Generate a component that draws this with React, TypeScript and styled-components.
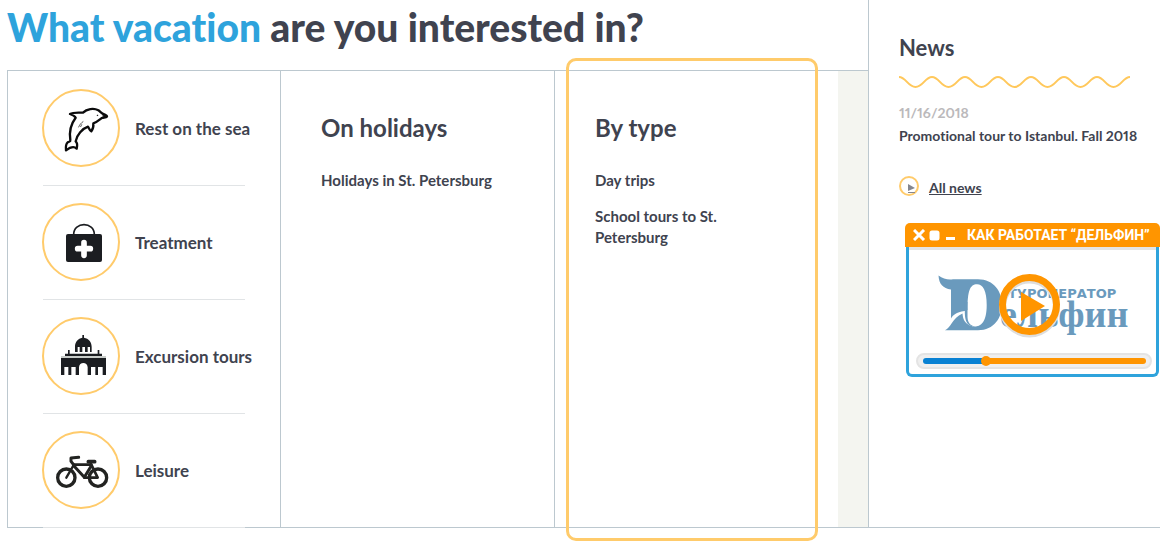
import React from 'react';
import styled, { createGlobalStyle } from 'styled-components';

const ink = '#40434f';
const line = '#bcc8cf';
const amber = '#ffcb6b';
const orange = '#ff9500';
const blue = '#2ea3dc';

const GlobalStyle = createGlobalStyle`
  * { box-sizing: border-box; }
  body {
    margin: 0;
    background: #fff;
    color: ${ink};
    font-family: Lato, "Open Sans", sans-serif;
    font-weight: 700;
    font-variant-ligatures: none;
    font-variant-numeric: proportional-nums;
  }
  h1, h2, p, ul { margin: 0; padding: 0; }
  ul { list-style: none; }
  a { color: inherit; text-decoration: none; }
`;

const Shell = styled.div`
  min-height: 100vh;
  padding: 0 0 14px 7px;
`;

const Page = styled.div`
  display: flex;
  border-bottom: 1px solid ${line};
`;

const Main = styled.main`
  flex: 1;
  min-width: 0;
`;

const Title = styled.h1`
  height: 70px;
  font-size: 39px;
  line-height: 54px;
  font-weight: 900;
  white-space: nowrap;
`;

const Accent = styled.span`
  color: ${blue};
`;

const Board = styled.div`
  display: grid;
  grid-template-columns: minmax(0, 274fr) minmax(0, 274fr) minmax(0, 283fr) 30px;
  border-top: 1px solid ${line};
`;

const Column = styled.section<{ $first?: boolean; $last?: boolean }>`
  position: relative;
  border-left: ${(p) => (p.$first ? `1px solid ${line}` : '0')};
  border-right: ${(p) => (p.$last ? '0' : `1px solid ${line}`)};
  padding: ${(p) => (p.$first ? '1px 35px 0' : '41px 40px 0')};
`;

const Gutter = styled.div`
  background: #f4f5f0;
`;

const Highlight = styled.div`
  position: absolute;
  inset: -13px 20px -14px 11px;
  border: 3px solid ${amber};
  border-radius: 10px;
  pointer-events: none;
`;

const Kinds = styled.ul`
  margin-bottom: -1px;
`;

const Kind = styled.li`
  padding: 17px 0 18px;
  border-bottom: 1px solid #e1e4e6;
`;

const KindLink = styled.a`
  display: flex;
  align-items: center;
  gap: 15px;
  margin-left: -1px;
  font-size: 17px;
  white-space: nowrap;
`;

const Disc = styled.span`
  flex: none;
  width: 78px;
  height: 78px;
  border: 2px solid ${amber};
  border-radius: 50%;

  svg { display: block; width: 100%; height: 100%; }
`;

const ColumnTitle = styled.h2`
  font-size: 24px;
  line-height: 32px;
`;

const Tours = styled.ul`
  display: grid;
  gap: 15px;
  max-width: 180px;
  padding-top: 26px;
  font-size: 15px;
  line-height: 21px;
`;

const Sidebar = styled.aside`
  flex: none;
  width: 292px;
  border-left: 1px solid ${line};
  padding: 34px 0 0 30px;
`;

const NewsTitle = styled.h2`
  font-size: 22px;
  line-height: 28px;
`;

const Wave = styled.svg`
  display: block;
  width: 231px;
  height: 12px;
  margin: 14px 0 15px;
`;

const NewsDate = styled.time`
  display: block;
  font-size: 14px;
  line-height: 20px;
  color: #bbb9bb;
`;

const NewsText = styled.p`
  font-size: 14px;
  line-height: 20px;
  padding-top: 3px;
  white-space: nowrap;
`;

const AllNews = styled.a`
  display: flex;
  align-items: flex-start;
  gap: 10px;
  margin-top: 30px;
  font-size: 14px;
  line-height: 24px;
  text-decoration: underline;

  svg { display: block; }
`;

const Video = styled.a`
  display: block;
  margin: 23px 0 0 6px;
`;

const VideoBar = styled.span`
  display: flex;
  align-items: center;
  gap: 10px;
  height: 24px;
  padding-left: 8px;
  border-radius: 5px 5px 0 0;
  background: ${orange};
  color: #fff;
  font-family: Roboto, sans-serif;
  font-size: 14px;
  white-space: nowrap;

  svg { flex: none; }
`;

const VideoBody = styled.span`
  display: block;
  margin: 0 1px;
  padding: 0 4px 5px 7px;
  border: solid ${blue};
  border-width: 0 3px 3px;
  border-radius: 0 0 6px 6px;
  box-shadow: inset 0 3px #e4e4e4;
`;

const Logo = styled.svg`
  display: block;
  width: 100%;
  height: 106px;
`;

const Scrubber = styled.span`
  display: flex;
  align-items: center;
  height: 16px;
  padding: 0 4px 0 5px;
  border: 2px solid #e4e4e4;
  border-radius: 8px;
  background: #efefef;
`;

const Played = styled.span`
  width: 63px;
  height: 6px;
  border-radius: 3px 0 0 3px;
  background: #0881d3;
`;

const Thumb = styled.span`
  width: 10px;
  height: 10px;
  margin: 0 -5px;
  border-radius: 50%;
  background: ${orange};
  z-index: 1;
`;

const Remaining = styled.span`
  flex: 1;
  height: 6px;
  border-radius: 0 3px 3px 0;
  background: ${orange};
`;

const Dolphin = () => (
  <svg viewBox="42 33 222 222" fill="none" stroke="#0b0b0c" strokeWidth="7" strokeLinejoin="round" strokeLinecap="round">
    <path d="M120 102C130 96 145 98 159 98C170 87 191 83 205 91C211 95 213 98 218 101C226 104 232 106 231 110C228 114 219 112 214 115C205 122 199 127 190 130C191 139 189 147 184 154C178 150 177 144 174 140C158 145 140 165 137 184C144 190 142 198 140 206C133 199 125 198 108 211C107 201 107 192 113 187C119 184 122 186 121 180C117 155 124 130 137 113C134 107 126 104 120 102Z" />
    <path d="M220 104L231 108L221 114Z" fill="#0b0b0c" strokeWidth="3" />
    <path d="M146 141C149 134 153 129 159 125M152 140L155 134" strokeWidth="2" />
    <circle cx="202" cy="106" r="1" strokeWidth="2" />
  </svg>
);

const MedicalBag = () => (
  <svg viewBox="42 30 222 222">
    <path d="M131 118C131 79 193 79 193 118" fill="none" stroke="#1b1d21" strokeWidth="5" />
    <rect x="108" y="117" width="108" height="84" rx="6" fill="#1b1d21" />
    <path d="M162 143V181M143 161H181" stroke="#fff" strokeWidth="17" strokeLinecap="round" />
  </svg>
);

const Palace = () => (
  <svg viewBox="42 27 222 222" fill="#1b1d21">
    <path d="M157 75H162V83C176 85 185 96 185 110V126H180V111H173V126H165V111H157V126H149V111H143V126H135V110C135 96 144 85 157 83Z" />
    <path d="M105 131H114V120H119V131H203V120H208V131H216V138H105Z" />
    <path d="M93 138H228V144H93Z" fill="#c9cdca" />
    <path d="M93 144H228V195H218V171H204V195H196V171H183V195H173V172C173 155 147 155 147 172V195H137V171H124V195H115V171H103V195H93Z" />
  </svg>
);

const Bicycle = () => (
  <svg viewBox="42 39 222 222" fill="none" stroke="#222321" strokeLinejoin="round" strokeLinecap="round">
    <circle cx="109" cy="173" r="26" strokeWidth="10" />
    <circle cx="204" cy="173" r="26" strokeWidth="10" />
    <path d="M109 173L130 137" strokeWidth="7" />
    <path d="M132 134H184L203 173H163" strokeWidth="8" />
    <path d="M132 138L163 172L184 137" strokeWidth="9" />
    <path d="M134 138L123 124V114L146 112" strokeWidth="9" />
    <path d="M175 125H194" strokeWidth="11" />
    <path d="M182 127L185 139" strokeWidth="7" />
  </svg>
);

const kinds = [
  { label: 'Rest on the sea', Icon: Dolphin },
  { label: 'Treatment', Icon: MedicalBag },
  { label: 'Excursion tours', Icon: Palace },
  { label: 'Leisure', Icon: Bicycle },
];

const wavePath =
  'M0 1' +
  Array.from({ length: 7 }, (_, i) => {
    const x = i * 33;
    return `C${x + 7} 1 ${x + 9} 11 ${x + 16.5} 11S${x + 26} 1 ${x + 33} 1`;
  }).join('');

export default function App() {
  return (
    <Shell>
      <GlobalStyle />
      <Page>
        <Main>
          <Title>
            <Accent>What vacation</Accent> are you interested in?
          </Title>
          <Board>
            <Column $first>
              <Kinds>
                {kinds.map(({ label, Icon }) => (
                  <Kind key={label}>
                    <KindLink href="#">
                      <Disc><Icon /></Disc>
                      {label}
                    </KindLink>
                  </Kind>
                ))}
              </Kinds>
            </Column>
            <Column>
              <ColumnTitle>On holidays</ColumnTitle>
              <Tours>
                <li><a href="#">Holidays in St. Petersburg</a></li>
              </Tours>
            </Column>
            <Column $last>
              <Highlight />
              <ColumnTitle>By type</ColumnTitle>
              <Tours>
                <li><a href="#">Day trips</a></li>
                <li><a href="#">School tours to St. Petersburg</a></li>
              </Tours>
            </Column>
            <Gutter />
          </Board>
        </Main>
        <Sidebar>
          <NewsTitle>News</NewsTitle>
          <Wave viewBox="0 0 231 12" fill="none" stroke="#ffc85c" strokeWidth="2">
            <path d={wavePath} />
          </Wave>
          <NewsDate dateTime="2018-11-16">11/16/2018</NewsDate>
          <NewsText><a href="#">Promotional tour to Istanbul. Fall 2018</a></NewsText>
          <AllNews href="#">
            <svg width="20" height="20" viewBox="0 0 20 20">
              <circle cx="10" cy="10" r="9" fill="none" stroke={amber} strokeWidth="2" />
              <path d="M9 8L16 12L9 15Z" fill="#84868f" />
              <path d="M9 16.5H16" stroke="#84868f" />
            </svg>
            All news
          </AllNews>
          <Video href="#">
            <VideoBar>
              <svg width="44" height="12" viewBox="0 0 44 12" stroke="#fff" strokeWidth="3">
                <path d="M1 1L11 11M11 1L1 11" />
                <rect x="18" y="3" width="7" height="7" rx="1" fill="#fff" />
                <path d="M33 9.5H42" />
              </svg>
              КАК РАБОТАЕТ “ДЕЛЬФИН”
            </VideoBar>
            <VideoBody>
              <Logo viewBox="916 247 236 106" fill="#6a9abd">
                <path fillRule="evenodd" d="M938.5 275.5C943 279 948 280 953 279.3H978C1010 279.3 1010 330.3 978 330.3H945C951 328 952 318 962.5 313.500C963 320 965 323 970 325.500C974 327 986.700 330 986.700 305C986.700 291 983 284.300 977 284.300C970 284.300 967.500 291 967.500 310L964.500 311C956 312.500 953 315 951 318.500V289.500C943 288.500 939 284 938.500 275.500Z" />
                <path d="M967.5 302V316C967.5 321 969 324.500 973 326H971C966 324 964.800 319 964.800 311V302Z" />
                <text x="1008" y="298" fontSize="13" fontWeight="700" fontFamily="DejaVu Sans">ТУРОПЕРАТОР</text>
                <text x="1000" y="327" fontSize="38" fontWeight="700" fontFamily="Liberation Serif">ельфин</text>
                <circle cx="1029.500" cy="307" r="27" fill="none" stroke="#dedede" strokeWidth="7" />
                <circle cx="1029.500" cy="304.500" r="27" fill="none" stroke={orange} strokeWidth="7" />
                <path d="M1021 292L1045 306L1021 321Z" fill={orange} />
              </Logo>
              <Scrubber>
                <Played />
                <Thumb />
                <Remaining />
              </Scrubber>
            </VideoBody>
          </Video>
        </Sidebar>
      </Page>
    </Shell>
  );
}
